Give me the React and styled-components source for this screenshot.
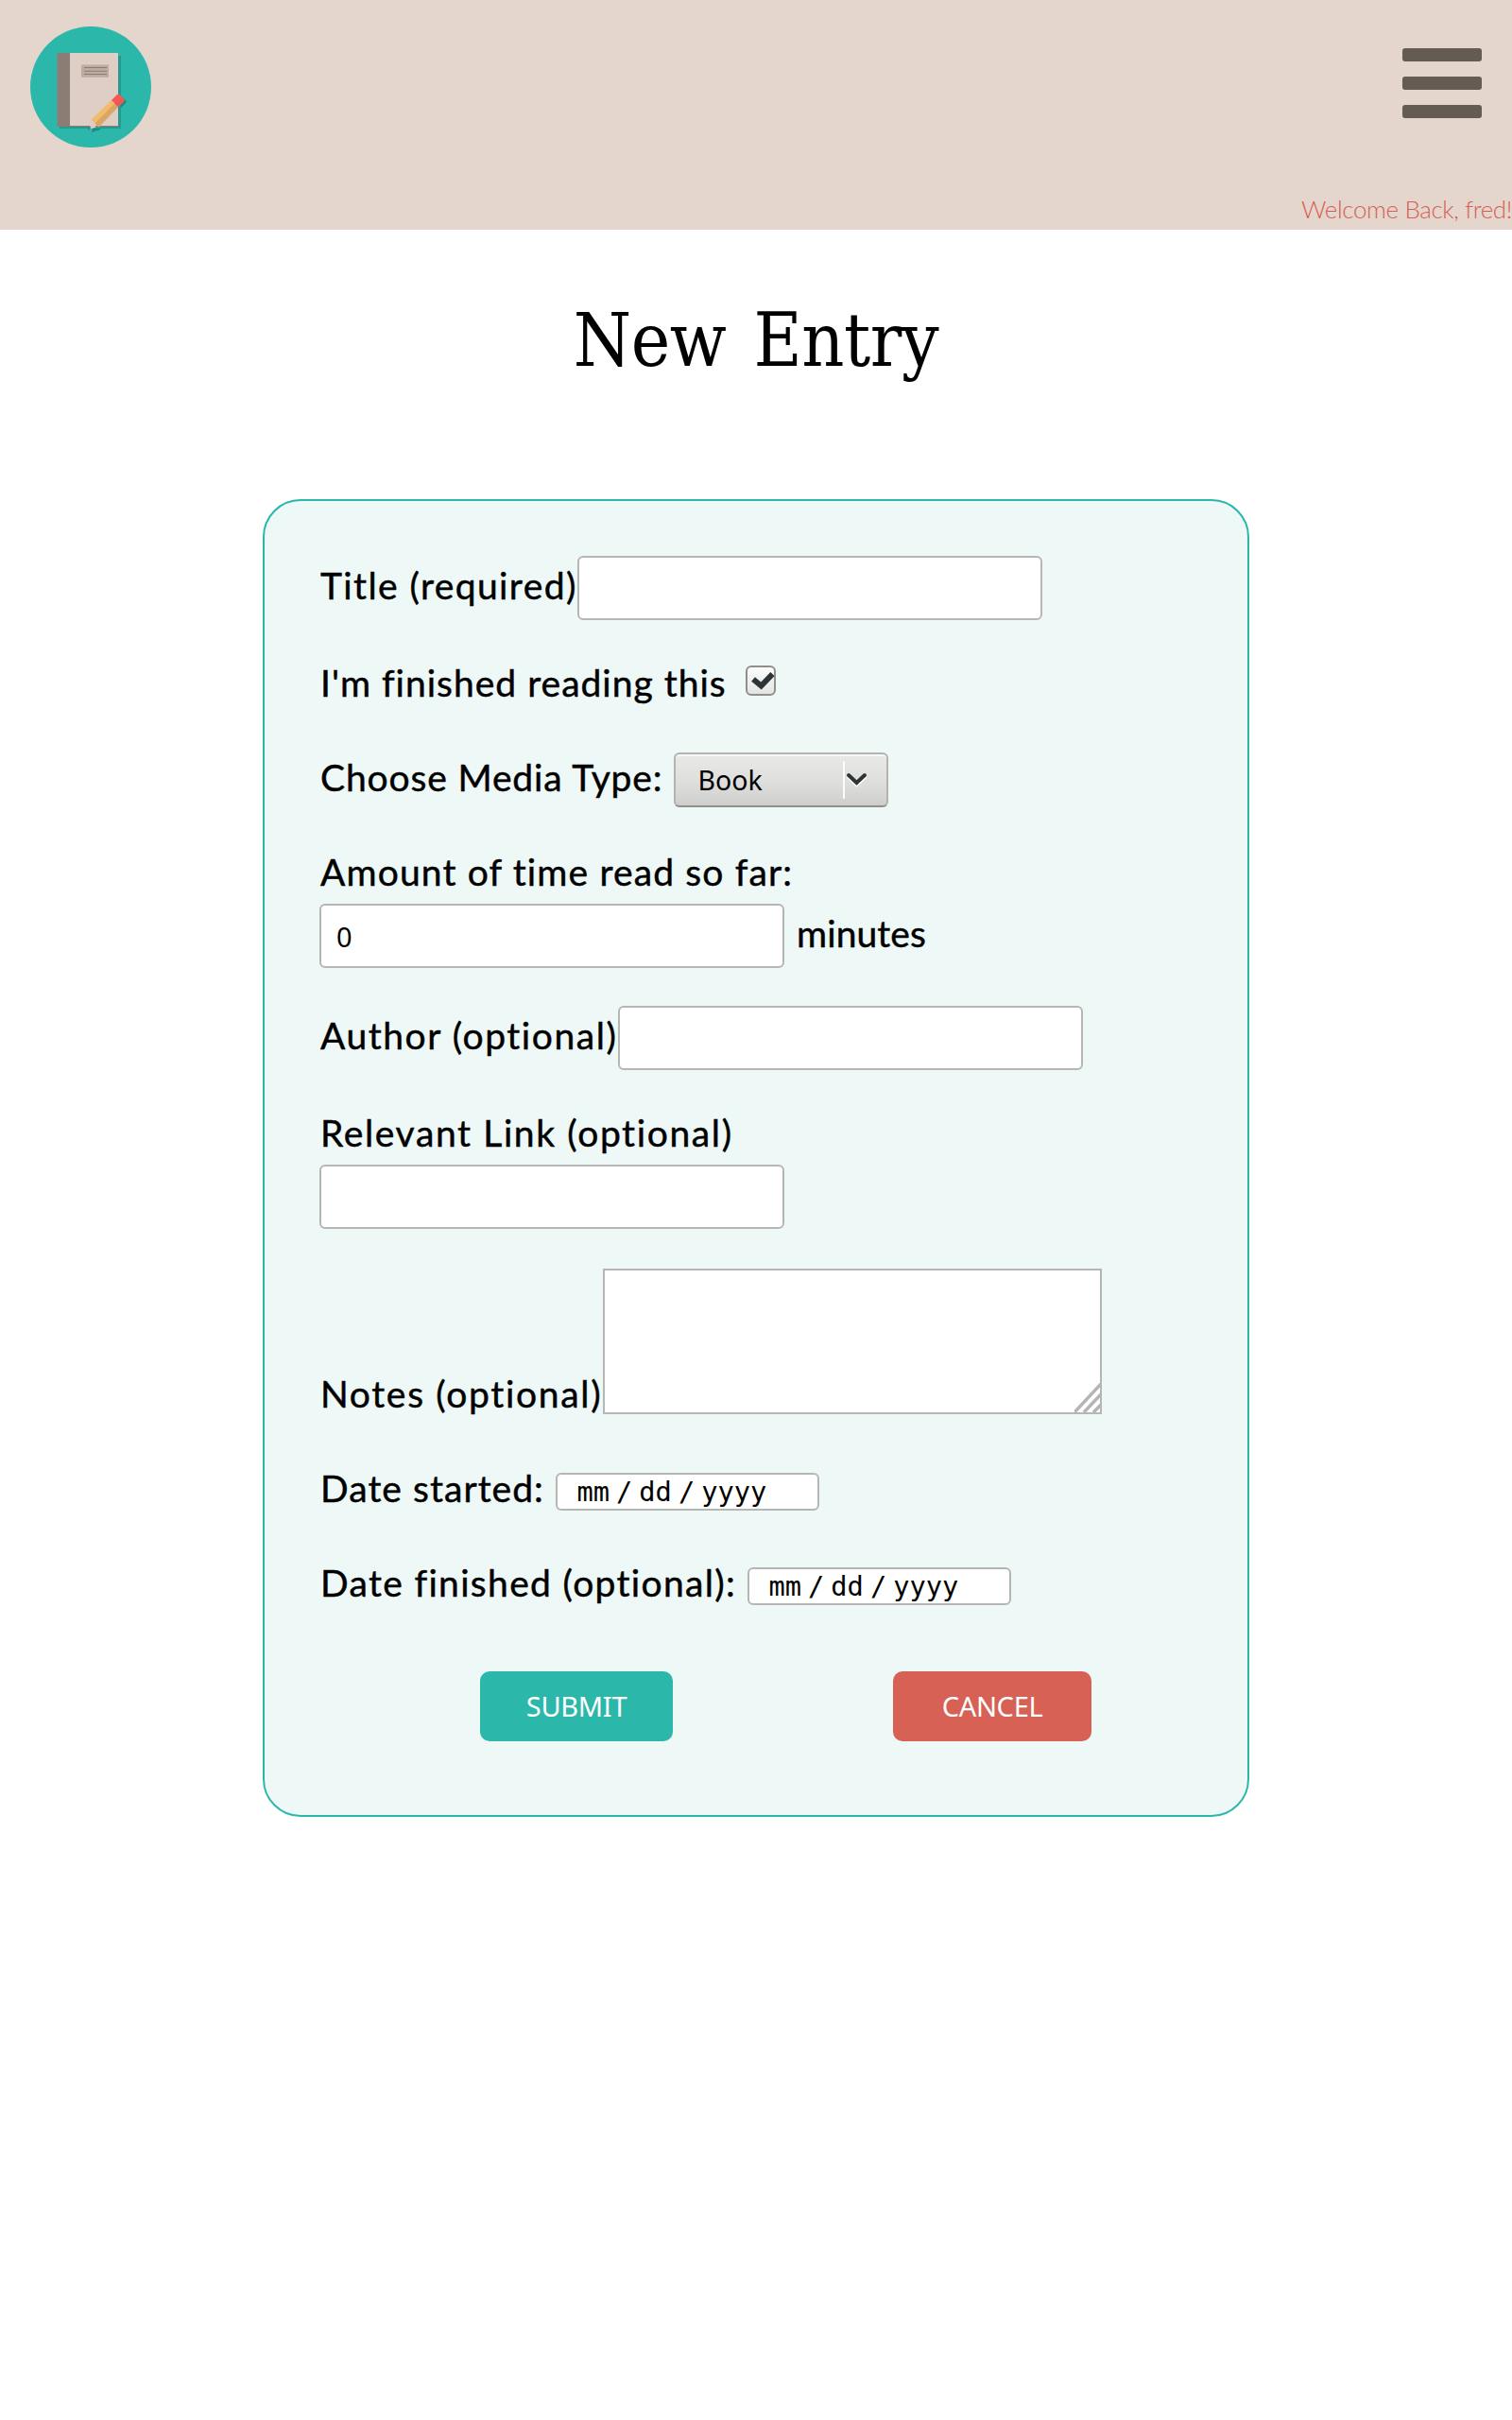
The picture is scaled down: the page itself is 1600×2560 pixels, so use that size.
import React from "react";
import styled, { createGlobalStyle } from "styled-components";

const teal = "#2cb7ab";
const sand = "#e4d6cd";
const coral = "#d75f53";
const line = "#b6b6b3";

const GlobalStyle = createGlobalStyle`
  *, *::before, *::after { box-sizing: border-box; }
  body {
    margin: 0;
    background: #fff;
    color: #000;
    font-family: Lato, "Liberation Sans", sans-serif;
  }
`;

const Page = styled.div`
  min-height: 2560px;
`;

const Header = styled.header`
  display: flex;
  flex-direction: column;
  justify-content: space-between;
  height: 243px;
  padding-top: 28px;
  background: ${sand};
`;

const Bar = styled.div`
  display: flex;
  justify-content: space-between;
  align-items: flex-start;
  padding: 0 32px;
`;

const Logo = styled.svg`
  display: block;
  width: 128px;
  height: 128px;
`;

const MenuButton = styled.button`
  display: flex;
  flex-direction: column;
  gap: 16px;
  width: 84px;
  margin-top: 23px;
  padding: 0;
  border: 0;
  background: none;
`;

const MenuLine = styled.span`
  width: 84px;
  height: 14px;
  border-radius: 3px;
  background: #645b54;
`;

const Welcome = styled.p`
  margin: 0;
  padding-bottom: 5px;
  text-align: right;
  font-size: 26px;
  font-weight: 300;
  line-height: 34px;
  letter-spacing: -0.4px;
  color: ${coral};
`;

const Heading = styled.h1`
  margin: 67px 0 0;
  height: 102px;
  font-family: "DejaVu Serif Condensed", "DejaVu Serif", serif;
  font-size: 78px;
  font-weight: 400;
  line-height: 100px;
  letter-spacing: -0.4px;
  word-spacing: 7px;
  text-align: center;
`;

const Card = styled.form`
  display: flex;
  flex-direction: column;
  width: 1044px;
  height: 1394px;
  margin: 115.5px auto 0;
  padding: 58.5px 58px 0;
  border: 2px solid ${teal};
  border-radius: 40px;
  background: #eef8f7;
`;

const Row = styled.div`
  display: flex;
  flex: none;
  align-items: ${(p) => p.$align || "center"};
  height: ${(p) => p.$h}px;
  margin-top: ${(p) => p.$gap || 0}px;
`;

const Label = styled.label`
  flex: none;
  width: ${(p) => (p.$w ? `${p.$w}px` : "auto")};
  margin-bottom: ${(p) => p.$lift ?? 6}px;
  padding-left: 1px;
  font-size: 39px;
  line-height: 40px;
  letter-spacing: ${(p) => p.$track || 0}px;
  white-space: nowrap;
  -webkit-text-stroke: 0.45px #000;
`;

const TextInput = styled.input`
  width: 492px;
  height: 68px;
  padding: 0 16px;
  border: 2px solid ${line};
  border-radius: 6px;
  background: #fff;
  color: #000;
  font: 29px "Noto Sans", sans-serif;
`;

const Unit = styled(Label)`
  margin-left: 12px;
`;

const Check = styled.span`
  display: flex;
  width: 32px;
  height: 32px;
  margin-bottom: 2px;
  border: 2px solid #8f908b;
  border-radius: 6px;
  background: linear-gradient(#fcfcfc, #e4e4e3);
`;

const Select = styled.button`
  display: flex;
  align-items: center;
  width: 227px;
  height: 58px;
  padding: 0 20px 0 24px;
  border: 2px solid #b3b3b0;
  border-bottom-color: #91918d;
  border-radius: 6px;
  background: linear-gradient(#e9e9e8, #dededd 55%, #cececc);
  box-shadow: inset 0 2px 0 #f7f7f7;
  color: #000;
  font: 28.500px "Noto Sans", sans-serif;
`;

const SelectValue = styled.span`
  flex: 1;
  text-align: left;
`;

const Divider = styled.span`
  width: 2px;
  height: 40px;
  background: #fcfcfc;
`;

const Chevron = styled.svg`
  width: 24px;
  height: 20px;
  margin-bottom: 1px;
`;

const NotesBox = styled.div`
  position: relative;
  width: 528px;
  height: 154px;
`;

const NotesArea = styled.textarea`
  display: block;
  width: 100%;
  height: 100%;
  border: 2px solid ${line};
  background: #fff;
  resize: none;
`;

const Grip = styled.svg`
  position: absolute;
  right: 1px;
  bottom: 2px;
  width: 28px;
  height: 31px;
`;

const DateField = styled.div`
  display: flex;
  align-items: center;
  gap: 7px;
  width: 279px;
  height: 40px;
  padding-left: 21px;
  border: 2px solid ${line};
  border-radius: 6px;
  background: #fff;
  font: 28.700px/36px "DejaVu Sans Mono", monospace;
`;

const Actions = styled.div`
  display: flex;
  flex: none;
  gap: 233px;
  margin-top: 70px;
  padding-left: 170px;
`;

const ActionButton = styled.button`
  width: ${(p) => p.$w}px;
  height: 74px;
  padding: 0 0 1px;
  border: 0;
  border-radius: 10px;
  background: ${(p) => p.$color};
  color: #fff;
  font: 400 29px "Noto Sans", sans-serif;
  letter-spacing: -0.3px;
`;

function NotebookLogo() {
  return (
    <Logo viewBox="32 28 128 128" aria-label="Reading log">
      <circle cx="96" cy="92" r="64" fill={teal} />
      <rect x="63" y="59" width="65" height="77" fill="#269a90" />
      <rect x="60.5" y="56" width="64.5" height="78" fill="#8b7d75" />
      <rect x="74" y="56" width="51" height="77" fill="#dfcec5" />
      <rect x="86" y="68.5" width="29" height="13.3" fill="#bfaca1" />
      <path d="M89 71.5h24M89 75.2h24M89 78.5h24" stroke="#8b7d75" strokeWidth="1.1" />
      <path d="M128 102l5 4q1.500 1.500 0 3l-5 5z" fill="#23887f" />
      <path d="M98 136h9q-3 2.500-6 2.500l-4 2z" fill="#23887f" />
      <path d="M118 106l7 7-20.500 21.500-8-8z" fill="#f3ba6c" />
      <path d="M121.700 109.300l3.500 3.700-20.700 21.500-4-4z" fill="#d7a766" />
      <path d="M118 106l5.500-5.500q1.700-1.500 3.500 0l4.200 4.300q1 1.500-.2 2.700l-5.800 5.800z" fill="#fb5652" />
      <path d="M121.700 109.600l7.600-7.200 1.900 2.400q1 1.500-.2 2.700l-5.800 5.800z" fill="#e05e5a" />
      <path d="M96.500 129.500l5.500 5-5 1.500-2-.5z" fill="#dccbc5" />
      <path d="M95.500 134.500l-2.200 3" stroke="#6f625b" strokeWidth="1.100" />
    </Logo>
  );
}

function DateInput() {
  return (
    <DateField>
      <span>mm</span>
      <span>/</span>
      <span>dd</span>
      <span>/</span>
      <span>yyyy</span>
    </DateField>
  );
}

export default function App() {
  return (
    <Page>
      <GlobalStyle />
      <Header>
        <Bar>
          <NotebookLogo />
          <MenuButton type="button" aria-label="Menu">
            <MenuLine />
            <MenuLine />
            <MenuLine />
          </MenuButton>
        </Bar>
        <Welcome>Welcome Back, fred!</Welcome>
      </Header>

      <Heading>New Entry</Heading>

      <Card>
        <Row $h={68}>
          <Label $w={273} $track={1.4}>Title (required)</Label>
          <TextInput />
        </Row>
        <Row $h={40} $gap={45}>
          <Label $w={450.5} $track={1} $lift={-2}>I'm finished reading this</Label>
          <Check>
            <svg viewBox="0 0 28 28">
              <path d="M6 12.500l8.500 7L26.500 7" fill="none" stroke="#2e3436" strokeWidth="6" />
            </svg>
          </Check>
        </Row>
        <Row $h={58} $gap={55}>
          <Label $w={374.5} $track={0.85}>Choose Media Type:</Label>
          <Select type="button">
            <SelectValue>Book</SelectValue>
            <Divider />
            <Chevron viewBox="0 0 24 20">
              <path d="M4 7l8.500 8L21 7" fill="none" stroke="#fff" strokeWidth="4" strokeLinecap="round" />
              <path d="M4 5l8.500 8L21 5" fill="none" stroke="#2e3436" strokeWidth="4" strokeLinecap="round" />
            </Chevron>
          </Select>
        </Row>
        <Row $h={40} $gap={47}>
          <Label $track={1.14} $lift={-2}>Amount of time read so far:</Label>
        </Row>
        <Row $h={68} $gap={15}>
          <TextInput defaultValue="0" />
          <Unit as="span" $track={0.1}>minutes</Unit>
        </Row>
        <Row $h={68} $gap={40}>
          <Label $w={316} $track={1.55}>Author (optional)</Label>
          <TextInput />
        </Row>
        <Row $h={40} $gap={45}>
          <Label $track={1.62} $lift={-2}>Relevant Link (optional)</Label>
        </Row>
        <Row $h={68} $gap={15}>
          <TextInput />
        </Row>
        <Row $h={154} $gap={42} $align="flex-end">
          <Label $w={299.5} $track={1.68} $lift={2}>Notes (optional)</Label>
          <NotesBox>
            <NotesArea />
            <Grip viewBox="0 0 28 31">
              <path d="M0 31L28 1M10 31L28 12M20 31L28 23" stroke="#b5b5b5" strokeWidth="3.500" />
            </Grip>
          </NotesBox>
        </Row>
        <Row $h={40} $gap={62}>
          <Label $w={249.5} $track={1.05} $lift={8}>Date started:</Label>
          <DateInput />
        </Row>
        <Row $h={40} $gap={60}>
          <Label $w={452.5} $track={1.33} $lift={8}>Date finished (optional):</Label>
          <DateInput />
        </Row>
        <Actions>
          <ActionButton type="button" $w={204} $color={teal}>SUBMIT</ActionButton>
          <ActionButton type="button" $w={210} $color="#d76155">CANCEL</ActionButton>
        </Actions>
      </Card>
    </Page>
  );
}
